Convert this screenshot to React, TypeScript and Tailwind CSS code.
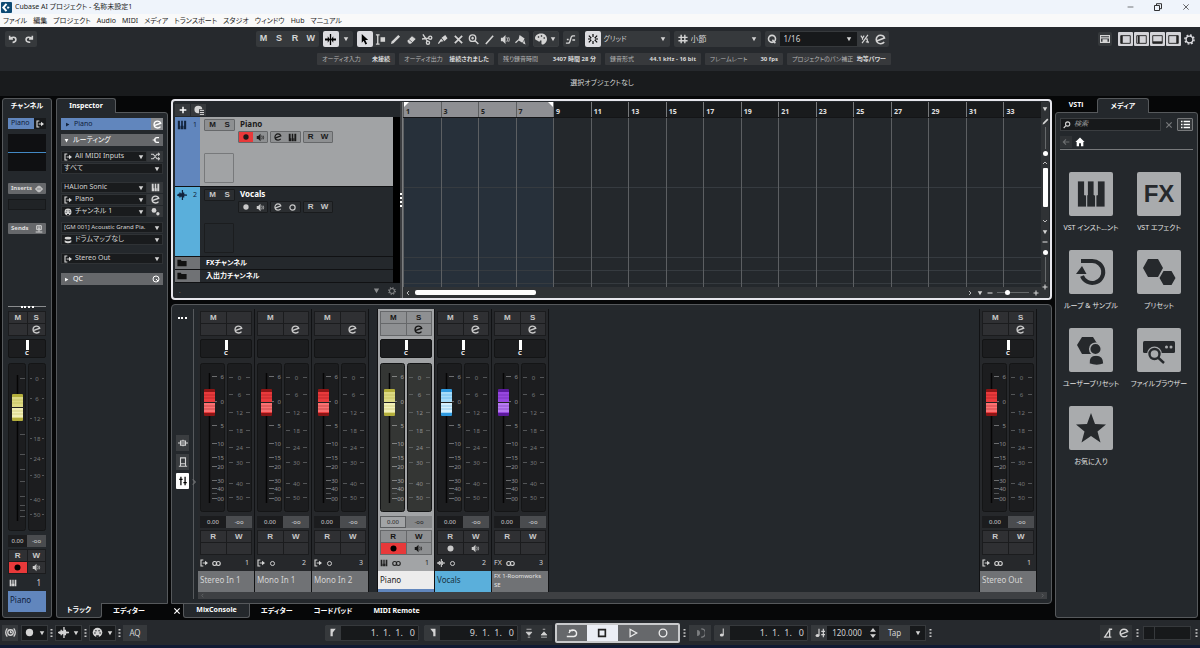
import React from "react";

const PATHS: Record<string, React.ReactNode> = {
  undo: <path d="M2 2v4h4M2.500 5.500C4 3.200 9.500 3 9.500 6.500 9.500 9 7.500 10 5.500 10" fill="none" stroke="currentColor" strokeWidth="1.900" />,
  redo: <path d="M10 2v4H6M9.500 5.500C8 3.200 2.500 3 2.500 6.500 2.500 9 4.500 10 7.500 9.800" fill="none" stroke="currentColor" strokeWidth="1.900" />,
  constrain: <path d="M0 5h3V2.500L5.500 6 3 9.500V7H0zM12 5H9V2.500L6.500 6 9 9.500V7h3zM5.300 0h1.400v12H5.300z" fill="currentColor" />,
  arrow: <path d="M3 0l7 6.500H6.800l2 4-1.800.9-1.900-4L3 9.500z" fill="currentColor" />,
  range: <><path d="M1 1h4M1 11h4M3 1v10" fill="none" stroke="currentColor" strokeWidth="1.500" /><path d="M6 3.500h5v5H6z" fill="currentColor" /></>,
  pencil: <path d="M1 11l.8-2.800L9 1l2 2-7.200 7.200z" fill="currentColor" />,
  eraser: <path d="M1 7.500L6.500 2 11 5.500 5.500 11H3zM3 5.800l4 3.400" fill="currentColor" stroke="#3c3f42" strokeWidth=".8" />,
  scissors: <g fill="none" stroke="currentColor" strokeWidth="1.500"><circle cx="9" cy="4" r="1.700" /><circle cx="6.500" cy="9.500" r="1.700" /><path d="M1 .5l5 7.500M0 5.500l7.500-1" /></g>,
  glue: <path d="M5 4l4-3 2.500 3.500L8 8zM4.500 5L7 8l-3 .5L2 11l-1-1z" fill="currentColor" />,
  x: <path d="M2 2l8 8M10 2l-8 8" fill="none" stroke="currentColor" strokeWidth="1.800" />,
  zoom: <g fill="none" stroke="currentColor" strokeWidth="1.500"><circle cx="5" cy="4.500" r="3.500" /><path d="M7.500 7l3.800 4M3.500 4.500h3M5 3v3" /></g>,
  search: <g fill="none" stroke="currentColor" strokeWidth="1.600"><circle cx="7" cy="4.500" r="3.200" /><path d="M4.500 7L1 10.500" /></g>,
  line: <path d="M2 11L10 2" fill="none" stroke="currentColor" strokeWidth="1.700" />,
  speaker: <><path d="M1 4h2l3-3v10L3 8H1z" fill="currentColor" /><path d="M7.500 3.500q1.500 2.500 0 5M9.500 3.500q1.300 2.500 0 5" fill="none" stroke="currentColor" /></>,
  bucket: <path d="M0 9l4-3.500L5 1l5.500 4L8 9.500 4 7 1 10zM10 6.500l1.500 5-3-1.500z" fill="currentColor" />,
  palette: <><path d="M6 .5C2 .5 0 3 0 5c0 2.500 2 2 3 3S5 9 5 7.500h1.500c0 2-.5 4 1 4S12 9.500 12 6 9.500.5 6 .5z" fill="currentColor" /><g fill="#17191b"><circle cx="3.500" cy="4" r=".8" /><circle cx="6.500" cy="3" r=".8" /><circle cx="9.200" cy="5" r=".8" /></g></>,
  curve: <path d="M1 10h2.500C7 10 5 2 8.500 2H11M2 6h2M8 6.500h3" fill="none" stroke="currentColor" strokeWidth="1.500" />,
  snap: <path d="M6 0v3.500M6 8.500V12M1 2l3 3M1 10l3-3M11 2L8 5M11 10L8 7M0 6h3.500M8.500 6H12" fill="none" stroke="currentColor" strokeWidth="1.400" />,
  hash: <path d="M3.800 1v10M8.200 1v10M.5 4h11M.5 8h11" fill="none" stroke="currentColor" strokeWidth="1.700" />,
  q: <g fill="none" stroke="currentColor" strokeWidth="1.900"><circle cx="6" cy="5.800" r="4.200" /><path d="M6.500 7l3.500 4" /></g>,
  iq: <path d="M1 2l2 3 2-3M3 5v2M2.500 11L9.500 1M7 6h2.500M7 9.500h3.500M8 5.500L10 11" fill="none" stroke="currentColor" strokeWidth="1.400" />,
  e: <path d="M2.500 7.300L10.300 4.300C9.700 2.300 8 1.400 6 1.400 3.400 1.400 1.400 3.500 1.400 6s2 4.600 4.800 4.600c1.600 0 2.900-.6 3.800-1.800" fill="none" stroke="currentColor" strokeWidth="1.800" />,
  route: <><path d="M5 1.500H1.500v9H5M4 6h4" fill="none" stroke="currentColor" strokeWidth="1.700" /><path d="M7.500 2.500L12 6l-4.500 3.500z" fill="currentColor" /></>,
  shuffle: <path d="M0 3h3l5 6h3M0 9h3l5-6h3M9.500 1l2 2-2 2M9.500 7l2 2-2 2" fill="none" stroke="currentColor" strokeWidth="1.400" />,
  keys: <path d="M1 1h2.500v6H4v4H1zM5 1h2v6h.7v4H4.600V7H5zM8.500 1H11v10H8.300V7h.2z" fill="currentColor" />,
  wave: <path d="M0 6h1.500M2 4.500v3M3.500 3v6M5 4v4M6.500 0v12M8 3v6M9.500 5v2M10 6h2" fill="none" stroke="currentColor" strokeWidth="1.500" />,
  rec: <circle cx="6" cy="6" r="4" fill="currentColor" />,
  ring: <circle cx="6" cy="6" r="3.500" fill="none" stroke="currentColor" strokeWidth="1.600" />,
  stereo: <g fill="none" stroke="currentColor" strokeWidth="1.500"><circle cx="3.600" cy="6" r="2.600" /><circle cx="8.400" cy="6" r="2.600" /></g>,
  midi: <><circle cx="6" cy="6" r="5.200" fill="currentColor" /><g fill="#202326"><circle cx="3.200" cy="6.500" r=".8" /><circle cx="4.300" cy="4" r=".8" /><circle cx="7.700" cy="4" r=".8" /><circle cx="8.800" cy="6.500" r=".8" /><path d="M4.500 9h3v2h-3z" /></g></>,
  drum: <><ellipse cx="6" cy="3.200" rx="5" ry="2" fill="currentColor" /><path d="M1 6.500q5 3 10 0v3q-5 3-10 0z" fill="currentColor" /></>,
  dots: <><circle cx="4" cy="4.500" r="3.200" fill="currentColor" /><circle cx="9.200" cy="9" r="2.200" fill="currentColor" /></>,
  split: <path d="M1 6h3M10.500 2.500H7.500Q4 2.500 4 6t3.500 3.500h3M6 6H4" fill="none" stroke="currentColor" strokeWidth="1.800" />,
  qc: <g fill="none" stroke="currentColor" strokeWidth="1.500"><circle cx="6" cy="6" r="4.500" /><path d="M6 6l3 3" /></g>,
  inserts: <path d="M0 6h3M9 6h3M3 3h6v6H3zM6 1v10" fill="none" stroke="currentColor" strokeWidth="1.500" />,
  sends: <path d="M2.500 1h7v6h-7zM6 7v3M1 10.500h10M4 3h4M4 5h4" fill="none" stroke="currentColor" strokeWidth="1.400" />,
  plus: <path d="M6 1v10M1 6h10" stroke="currentColor" strokeWidth="2.200" />,
  minus: <path d="M1 6h10" stroke="currentColor" strokeWidth="2.200" />,
  preset: <><path d="M5 1a4.500 4.500 0 1 0 0 9h1V5h4Q9.500 1 5 1z" fill="currentColor" /><path d="M7 6.500h5M7 9h5M7 11.300h5" stroke="currentColor" strokeWidth="1.200" /></>,
  folder: <path d="M.5 2h4l1 1.500h6V10H.5z" fill="currentColor" />,
  gear: <g fill="none" stroke="currentColor"><circle cx="6" cy="6" r="3.700" strokeWidth="1.500" /><circle cx="6" cy="6" r="5" strokeWidth="1.600" strokeDasharray="1.960 1.960" /></g>,
  list: <path d="M0 2h2M3.500 2H12M0 6h2M3.500 6H12M0 10h2M3.500 10H12" stroke="currentColor" strokeWidth="1.800" />,
  back: <path d="M11 6H2M6 2L2 6l4 4" fill="none" stroke="currentColor" strokeWidth="1.700" />,
  home: <path d="M6 .5L.5 6H2v5h2.800V7.500h2.400V11H10V6h1.500z" fill="currentColor" />,
  left: <path d="M8 2L4 6l4 4" fill="none" stroke="currentColor" strokeWidth="1.700" />,
  right: <path d="M4 2l4 4-4 4" fill="none" stroke="currentColor" strokeWidth="1.700" />,
  up: <path d="M2 8l4-4 4 4" fill="none" stroke="currentColor" strokeWidth="1.700" />,
  down: <path d="M2 4l4 4 4-4" fill="none" stroke="currentColor" strokeWidth="1.700" />,
  tri: <path d="M1.500 2.500h9L6 10.500z" fill="currentColor" />,
  triR: <path d="M2.500 1.500v9L10.500 6z" fill="currentColor" />,
  clock: <g fill="none" stroke="currentColor" strokeWidth="1.400"><circle cx="6" cy="6" r="3" /><path d="M2.500 1.500Q-1 6 2.500 10.500M9.500 1.500q3.500 4.500 0 9M6 4v2h1.500" /></g>,
  flagL: <path d="M2 1h7L5 6v5H2z" fill="currentColor" />,
  flagR: <path d="M10 1H3l4 5v5h3z" fill="currentColor" />,
  punchD: <path d="M3 1.500h6M2.500 5h7L6 9zM4.500 11h3" fill="currentColor" stroke="currentColor" strokeWidth=".9" />,
  punchU: <path d="M4.500 1.500h3M2.500 8.500h7L6 4.500zM2.500 11h7" fill="currentColor" stroke="currentColor" strokeWidth=".9" />,
  cycle: <path d="M3.500 9.500H8Q11 9 10.500 5.500 9.500 2.500 6 3q-2 .5-3 3M.8 9.500h3M3 3.500h4" fill="none" stroke="currentColor" strokeWidth="1.400" />,
  stop: <path d="M2 2h8v8H2z" fill="none" stroke="currentColor" strokeWidth="2" />,
  play: <path d="M2.500 1.500v9L10.500 6z" fill="none" stroke="currentColor" strokeWidth="1.500" />,
  recO: <circle cx="6" cy="6" r="4.600" fill="none" stroke="currentColor" strokeWidth="1.600" />,
  moon: <><path d="M2.500 2.500a3.500 3.500 0 0 1 0 7z" fill="currentColor" /><path d="M7.500 1a5 5 0 0 1 0 10" fill="none" stroke="currentColor" strokeWidth="1.700" /></>,
  note: <><ellipse cx="5" cy="9.300" rx="2.600" ry="2" fill="currentColor" /><path d="M7 9.500V.5" stroke="currentColor" strokeWidth="1.400" /></>,
  tempo: <><ellipse cx="3" cy="9" rx="2.300" ry="1.800" fill="currentColor" /><path d="M4.800 9V1M7.500 4H12M7.500 8H12M10 1v10" fill="none" stroke="currentColor" strokeWidth="1.400" /></>,
  spin: <path d="M6 0l3.500 4.500h-7zM6 12L2.500 7.500h7z" fill="currentColor" />,
  metro: <path d="M1 11h9M2 11L8 2M7 1.500h4M8 2v9" fill="none" stroke="currentColor" strokeWidth="1.600" />,
  eqv: <path d="M3 3.500h6v5H3zM0 6h12M6 2v1.500M6 8.500V10" fill="none" stroke="currentColor" strokeWidth="1.300" />,
  sendv: <path d="M3 1h6v7H3zM1 11h10M3 8v3M9 8v3" fill="none" stroke="currentColor" strokeWidth="1.300" />,
  faders: <path d="M3.500 1v10M8.500 1v10M1.500 4h4M6.500 8h4" fill="none" stroke="currentColor" strokeWidth="1.500" />,
  keyboard: <path d="M.5 2h11v8H.5zM.5 4.500h11M3 7h6M3 8.500h6" fill="none" stroke="currentColor" strokeWidth="1.500" />,
};

function Ico({ n, c = "size-[10px]" }: { n: string; c?: string }) {
  return (
    <svg viewBox="0 0 12 12" className={`shrink-0 ${c}`} aria-hidden="true">
      {PATHS[n]}
    </svg>
  );
}

function Btn({ label, children, c = "" }: { label: string; children?: React.ReactNode; c?: string }) {
  return (
    <button type="button" aria-label={label} className={`flex items-center justify-center ${c}`}>
      {children}
    </button>
  );
}

function Sel({ label, value, c = "", t = "" }: { label: string; value: string; c?: string; t?: string }) {
  return (
    <span className={`flex min-w-0 flex-1 items-center ${c}`}>
      <select aria-label={label} className={`min-w-0 flex-1 appearance-none bg-transparent outline-none ${t}`}>
        <option>{value}</option>
      </select>
      <Ico n="tri" c="size-[6px]" />
    </span>
  );
}

const Dots = () => (
  <svg viewBox="0 0 3 10" className="h-[10px] w-[3px] shrink-0 text-[#c8c8c8]" aria-hidden="true">
    <path d="M.5 1h2v1.500h-2zM.5 4.200h2v1.500h-2zM.5 7.400h2v1.500h-2z" fill="currentColor" />
  </svg>
);

/* ---------- Title, menu, toolbar ---------- */

const MENU = ["ファイル", "編集", "プロジェクト", "Audio", "MIDI", "メディア", "トランスポート", "スタジオ", "ウィンドウ", "Hub", "マニュアル"];

function TitleBar() {
  return (
    <header className="bg-[#eff4fb] text-[#1c1c1c]">
      <div className="flex h-[14px] items-center gap-[3px] px-[1px]">
        <svg viewBox="0 0 12 12" className="size-[11px]" aria-hidden="true">
          <rect width="12" height="12" rx="1" fill="#0d4a73" />
          <path d="M6 2L2.500 6 6 10" fill="none" stroke="#fff" strokeWidth="2.200" />
          <path d="M7.500 4.500L6.500 6l1 1.500 2-1.500z" fill="#fff" />
        </svg>
        <h1 className="text-[7px] leading-[14px]">Cubase AI プロジェクト - 名称未設定1</h1>
        <div className="ml-auto flex items-center gap-[20px] pr-[9px]">
          <Btn label="最小化"><Ico n="minus" c="h-[8px] w-[7px] [&_path]:stroke-1" /></Btn>
          <Btn label="元に戻す">
            <svg viewBox="0 0 8 8" className="size-[8px]"><path d="M.5 2.500h5v5h-5zM2.500 2V.7h5v5H6" fill="none" stroke="currentColor" strokeWidth=".9" /></svg>
          </Btn>
          <Btn label="閉じる"><Ico n="x" c="size-[8px] [&_path]:stroke-1" /></Btn>
        </div>
      </div>
      <nav className="flex h-[13px] items-center gap-[6px] bg-[#f9f9f9] px-[3px] text-[7px] leading-[13px]">
        {MENU.map((m) => (
          <button type="button" key={m}>{m}</button>
        ))}
      </nav>
    </header>
  );
}

const TOOLS = ["range", "pencil", "eraser", "scissors", "glue", "x", "zoom", "line", "speaker", "bucket"];
const STATUS = [
  ["オーディオ入力", "未接続", "w-[78px]"],
  ["オーディオ出力", "接続されました", "w-[95px]"],
  ["残り録音時間", "3407 時間 28 分", "w-[103px]"],
  ["録音形式", "44.1 kHz - 16 bit", "w-[96px]"],
  ["フレームレート", "30 fps", "w-[78px]"],
  ["プロジェクトのパン補正", "均等パワー", "w-[104px]"],
];

function Toolbar() {
  const box = "flex h-[16px] items-center rounded-[2px] bg-[#36393c]";
  return (
    <section className="bg-[#26292d] pt-[4px]">
      <div className="flex h-[16px] items-center justify-between px-[5px]">
        <div className={`${box} w-[32px] justify-around`}>
          <Btn label="元に戻す"><Ico n="undo" /></Btn>
          <Btn label="やり直し"><Ico n="redo" /></Btn>
        </div>
        <div className="flex items-center gap-[4px] pl-[9px]">
          <div className={`${box} w-[63px] font-[Liberation_Sans] text-[9px] font-bold`}>
            {["M", "S", "R", "W"].map((l) => <Btn key={l} label={l} c="flex-1">{l}</Btn>)}
          </div>
          <div className={`${box} bg-[#17191b]`}>
            <Btn label="オートスクロール" c="size-[16px] rounded-[2px] bg-[#dcdce0] text-black"><Ico n="constrain" c="size-[11px]" /></Btn>
            <Btn label="オートスクロール設定" c="w-[14px]"><Ico n="tri" c="size-[6px]" /></Btn>
          </div>
          <div className={`${box} w-[172px]`}>
            <Btn label="オブジェクトの選択" c="size-[16px] rounded-[2px] bg-[#dcdce0] text-black"><Ico n="arrow" c="size-[11px]" /></Btn>
            {TOOLS.map((t) => <Btn key={t} label={t} c="h-[16px] flex-1"><Ico n={t} c="size-[11px]" /></Btn>)}
          </div>
          <div className={`${box} w-[26px] justify-around border border-[#3a3d40] bg-[#17191b]`}>
            <Btn label="カラー"><Ico n="palette" c="size-[12px]" /></Btn>
            <Btn label="カラーメニュー"><Ico n="tri" c="size-[6px]" /></Btn>
          </div>
          <div className={`${box} w-[16px] justify-center`}><Btn label="ゼロクロス"><Ico n="curve" c="size-[11px]" /></Btn></div>
          <div className={`${box} ml-[2px] w-[85px] bg-[#17191b]`}>
            <Btn label="スナップ" c="size-[16px] rounded-[2px] bg-[#dcdce0] text-black"><Ico n="snap" /></Btn>
            <Sel label="スナップタイプ" value="グリッド" c="pl-[3px] pr-[4px]" t="text-[7px]" />
          </div>
          <div className={`${box} w-[87px] bg-[#17191b] px-[4px]`}>
            <Ico n="hash" />
            <Sel label="グリッドタイプ" value="小節" c="pl-[3px]" t="text-[8px]" />
          </div>
          <div className={`${box} w-[124px]`}>
            <Btn label="クオンタイズ" c="w-[15px]"><Ico n="q" /></Btn>
            <Sel label="クオンタイズプリセット" value="1/16" c="h-[14px] bg-[#17191b] pl-[4px] pr-[5px]" t="text-[8px]" />
            <Btn label="ソフトクオンタイズ" c="w-[16px]"><Ico n="iq" /></Btn>
            <Btn label="クオンタイズパネル" c="w-[16px]"><Ico n="e" c="size-[11px]" /></Btn>
          </div>
        </div>
        <div className="flex items-center gap-[6px]">
          <Btn label="オンスクリーンキーボード" c="size-[14px] rounded-[2px] bg-[#36393c]"><Ico n="keyboard" /></Btn>
          <div className="flex items-center gap-[1px] text-[#dcdce0]">
            {["M2 2v8", "M3 2v8", "M1 9h10", "M10 2v8"].map((d, i) => (
              <Btn key={d} label={`ゾーン ${i + 1}`} c="h-[14px] w-[15px] rounded-[1px] bg-[#d4d4d8] text-[#222]">
                <svg viewBox="0 0 12 12" className="size-[11px]"><path d="M.8 1.800h10.400v8.400H.8z" fill="none" stroke="currentColor" strokeWidth="1" /><path d={d} stroke="currentColor" strokeWidth="2" /></svg>
              </Btn>
            ))}
            <Btn label="設定" c="ml-[1px] h-[14px] w-[12px]"><Ico n="gear" c="size-[11px]" /></Btn>
          </div>
        </div>
      </div>
      <dl className="flex h-[24px] items-center justify-center gap-[4px] pl-[8px] text-[6px]">
        {STATUS.map(([k, v, w]) => (
          <div key={k} className={`flex h-[12px] items-center justify-between whitespace-nowrap rounded-[1px] bg-[#37393c] px-[5px] ${w}`}>
            <dt className="text-[#b4b4b4]">{k}</dt>
            <dd className="font-bold text-[#d8d8d8]">{v}</dd>
          </div>
        ))}
      </dl>
    </section>
  );
}

/* ---------- Channel strip parts ---------- */

type Scale = { w: number; h: number; capX: number; capY: number; top: number; bottom: number; fader: [number, string][]; ticks: number[]; meter: [number, string][] };

const MIX: Scale = {
  w: 52, h: 149, capX: 4, capY: 26, top: 10, bottom: 140,
  fader: [[13, "6"], [38, "0"], [62, "5"], [80, "10"], [94, "15"], [103, "20"], [117, "30"], [125, "40"], [135, "00"]],
  ticks: [130],
  meter: [[14, "0"], [31, "6"], [49, "12"], [67, "18"], [84, "24"], [99, "30"], [120, "40"], [134, "50"]],
};
const SIDE: Scale = {
  w: 38, h: 168, capX: 4, capY: 31, top: 12, bottom: 158, fader: [],
  ticks: [15, 71, 91, 106, 118, 133, 142, 147, 153],
  meter: [[15, "0"], [35, "6"], [55, "12"], [75, "18"], [95, "24"], [112, "30"], [136, "40"], [151, "50"]],
};
const CAPS: Record<string, [string, string, string]> = {
  red: ["#8c1515", "#e93a3c", "#ff8080"],
  yellow: ["#b3ae3c", "#dcd984", "#f6f4c4"],
  blue: ["#2f9ae0", "#a6dcfa", "#e4f6ff"],
  purple: ["#5b1a9c", "#9747e0", "#c08af6"],
};

function Fader({ s, color, light = false, name }: { s: Scale; color: string; light?: boolean; name: string }) {
  const [edge, mid, hi] = CAPS[color];
  const bg = light ? "#343634" : "#1c1d1f";
  const fg = light ? "#a4a4a4" : "#8f9092";
  const wide = s.w > 40;
  const half = wide ? 24 : 17;
  const right = s.w - half;
  const mx = right + half / 2;
  const dash = wide ? 4 : 2;
  return (
    <div className="relative">
      <svg viewBox={`0 0 ${s.w} ${s.h}`} className="block w-full font-[Noto_Sans]" aria-hidden="true">
        <rect x=".5" y=".5" width={half} height={s.h - 1} rx="2" fill={bg} stroke="#141516" />
        <rect x={right - 0.5} y=".5" width={half} height={s.h - 1} rx="2" fill={bg} stroke="#141516" />
        <path d={`M9.500 ${s.top}V${s.bottom}`} stroke="#050505" strokeWidth="1.500" />
        {s.ticks.map((y) => <path key={y} d={`M12 ${y + 0.5}h5`} stroke="#5e6062" strokeWidth=".8" />)}
        {s.fader.map(([y, t]) => (
          <g key={t}>
            <path d={`M12 ${y + 0.5}h5`} stroke={fg} strokeWidth=".7" />
            <text x="24" y={y + 2.5} fontSize="6" textAnchor="end" fill={fg}>{t}</text>
          </g>
        ))}
        {s.meter.map(([y, t]) => (
          <g key={t}>
            <path d={`M${right + 1} ${y + 0.5}h${dash}M${s.w - 2 - dash} ${y + 0.5}h${dash}`} stroke="#6c6e70" strokeWidth=".7" />
            <text x={mx - 0.5} y={y + 2.5} fontSize="6" textAnchor="middle" fill={light ? "#909090" : "#77797b"}>{t}</text>
          </g>
        ))}
        <g transform={`translate(${s.capX} ${s.capY})`}>
          <rect width="11" height="27" rx="1" fill={edge} />
          <rect y="3" width="11" height="21" fill={mid} />
          <rect y="14" width="11" height="9" fill={hi} opacity=".8" />
          <path d="M0 6h11M0 9h11M0 17h11M0 20h11" stroke={edge} strokeWidth=".7" opacity=".6" />
          <path d="M0 13.500h13" stroke="#222" strokeWidth="1" />
        </g>
      </svg>
      <input type="range" aria-label={`${name} ボリューム`} className="absolute inset-0 h-full w-1/2 opacity-0 [writing-mode:vertical-lr]" />
    </div>
  );
}

function Cell({ label, text, icon, on = false, light = false }: { label: string; text?: string; icon?: string; on?: boolean; light?: boolean }) {
  const tone = on ? "bg-[#e8393a] text-black" : light ? "bg-[#8e9092] text-[#151515]" : "bg-[#2f3033] text-[#c9c9c9]";
  return (
    <Btn label={label} c={`h-[11px] ${tone}`}>
      {text}
      {icon && <Ico n={icon} c="size-[9px]" />}
    </Btn>
  );
}

const gridOf = (light: boolean) =>
  `grid grid-cols-2 gap-px border ${light ? "border-[#66686a] bg-[#66686a]" : "border-[#1b1c1e] bg-[#1b1c1e]"} font-[Liberation_Sans] text-[8px] font-bold`;

function Controls({ name, solo, color, pan, rec, light = false, scale }: { name: string; solo: boolean; color: string; pan: boolean; rec?: "on" | "off"; light?: boolean; scale: Scale }) {
  return (
    <>
      <div className={gridOf(light)}>
        <Cell light={light} label="ミュート" text="M" />
        <Cell light={light} label="ソロ" text={solo ? "S" : ""} />
        <Cell light={light} label="リッスン" />
        <Cell light={light} label="編集" icon="e" />
      </div>
      <div className="mt-[3px] h-[19px] rounded-[2px] border border-[#131415] bg-[#1c1d1f] text-center text-[6px] font-bold leading-[7px] text-white">
        {pan && (
          <>
            <div className="mx-auto h-[10px] w-[3px] bg-white" />
            C
          </>
        )}
      </div>
      <div className="mt-[5px]"><Fader s={scale} color={color} light={light} name={name} /></div>
      <div className="mt-[4px] grid h-[12px] grid-cols-2 text-center text-[6px] leading-[12px]">
        <output className={light ? "border border-[#5b5d5f] leading-[10px] text-[#202020]" : "bg-[#1b1c1e]"}>0.00</output>
        <output className={light ? "bg-[#858789] text-[#202020]" : "bg-[#4a4c4f]"}>-oo</output>
      </div>
      <div className={`mt-[2px] ${gridOf(light)}`}>
        <Cell light={light} label="リード" text="R" />
        <Cell light={light} label="ライト" text="W" />
        <Cell light={light} label="録音可能" icon={rec ? "rec" : undefined} on={rec === "on"} />
        <Cell light={light} label="モニター" icon={rec ? "speaker" : undefined} />
      </div>
    </>
  );
}

type StripData = { name: string; no: number; solo: boolean; color: string; pan: boolean; rec?: "on" | "off"; light?: boolean; icon: string; mode: string; nameC: string };

const INPUTS: StripData[] = [
  { name: "Stereo In 1", no: 1, solo: false, color: "red", pan: true, icon: "route", mode: "stereo", nameC: "bg-[#707275]" },
  { name: "Mono In 1", no: 2, solo: false, color: "red", pan: false, icon: "route", mode: "ring", nameC: "bg-[#707275]" },
  { name: "Mono In 2", no: 3, solo: false, color: "red", pan: false, icon: "route", mode: "ring", nameC: "bg-[#707275]" },
];
const TRACKS: StripData[] = [
  { name: "Piano", no: 1, solo: true, color: "yellow", pan: true, rec: "on", light: true, icon: "keys", mode: "stereo", nameC: "bg-[#ececec] text-[#222] border-b-[3px] border-[#6186bd]" },
  { name: "Vocals", no: 2, solo: true, color: "blue", pan: true, rec: "off", icon: "wave", mode: "ring", nameC: "bg-[#5aafdb] text-[#18323f]" },
  { name: "FX 1-Roomworks SE", no: 3, solo: true, color: "purple", pan: true, icon: "FX", mode: "stereo", nameC: "bg-[#707275] text-[#e4e4e4]" },
];
const OUT: StripData = { name: "Stereo Out", no: 1, solo: true, color: "red", pan: true, icon: "route", mode: "stereo", nameC: "bg-[#707275]" };

function Strip({ d }: { d: StripData }) {
  return (
    <article className={`flex w-[57px] shrink-0 flex-col border-r border-[#111214] ${d.light ? "bg-[#a2a4a6] text-[#222]" : "bg-[#26282b] text-[#d4d4d4]"}`}>
      <div className="px-[2px] pt-[2px]"><Controls {...d} light={d.light} scale={MIX} /></div>
      <div className="flex h-[16px] items-center gap-[4px] px-[2px] text-[7px]">
        {d.icon === "FX" ? <span>FX</span> : <Ico n={d.icon} c="size-[8px]" />}
        <Ico n={d.mode} c={d.mode === "ring" ? "size-[7px]" : "size-[9px]"} />
        <span className="ml-auto pr-[3px]">{d.no}</span>
      </div>
      <h3 className={`h-[21px] px-[2px] ${d.name.length > 12 ? "pt-[1px] text-[6px] leading-[9px]" : "truncate text-[8px] leading-[18px]"} ${d.nameC}`}>{d.name}</h3>
    </article>
  );
}

/* ---------- Left column ---------- */

const FRAME = "border border-[#56595c] bg-[#24282c]";

function ChannelPanel() {
  const head = "flex h-[11px] items-center justify-between rounded-[1px] bg-[#66686b] px-[3px] text-[6px] font-bold text-[#ddd]";
  return (
    <aside className={`mr-px flex w-[50px] shrink-0 flex-col rounded-[3px] px-[5px] pb-[5px] text-[8px] ${FRAME}`}>
      <h2 className="flex h-[19px] items-center justify-center whitespace-nowrap pb-[4px] text-[7px] font-bold text-white">チャンネル</h2>
      <div className="flex h-[11px] items-center bg-[#6186bd] text-[#10203a]">
        <span className="flex-1 pl-[3px] text-[7px]">Piano</span>
        <Btn label="ルーティング" c="h-[11px] w-[12px] bg-[#17191b] text-[#ddd]"><Ico n="route" c="size-[8px]" /></Btn>
      </div>
      <div className="mt-[5px] flex h-[37px] items-center bg-[#0f1012]"><div className="h-px flex-1 bg-[#4389c4]" /></div>
      <div className={`mt-[12px] ${head}`}>Inserts<Ico n="inserts" c="size-[8px]" /></div>
      <div className="mt-[5px] h-[11px] border border-[#17191b] bg-[#202326]" />
      <div className={`mt-[13px] ${head}`}>Sends<Ico n="sends" c="size-[8px]" /></div>
      <div className="flex-1" />
      <div className="mb-[3px] flex h-[2px] items-center justify-center bg-[linear-gradient(#8a8c8e,#8a8c8e)] bg-[length:100%_1px] bg-no-repeat"><div className="w-[13px] border-t-2 border-dotted border-white" /></div>
      <Controls name="Piano" solo color="yellow" pan rec="on" scale={SIDE} />
      <div className="flex h-[17px] items-center justify-between px-[1px] pr-[5px]"><Ico n="keys" c="size-[8px]" />1</div>
      <div className="h-[21px] bg-[#6186bd] pl-[2px] leading-[17px] text-[#10203a]">Piano</div>
    </aside>
  );
}

function Row({ icon, value, right, label }: { icon?: string; value: string; right?: string; label: string }) {
  return (
    <div className="flex h-[12px] items-stretch border-b border-[#24282c] bg-[#191b1d] text-[7px]">
      <div className="flex min-w-0 flex-1 items-center gap-[3px] border border-[#2f3235] px-[2px]">
        {icon && <Ico n={icon} c="size-[8px]" />}
        <Sel label={label} value={value} t={value.length > 20 ? "text-[6px]" : ""} />
      </div>
      {right && <Btn label={`${label}設定`} c="w-[16px] bg-[#34373a]"><Ico n={right} c="size-[9px]" /></Btn>}
    </div>
  );
}

function Inspector() {
  return (
    <aside className="flex w-[112px] shrink-0 flex-col">
      <h2 className={`z-10 -mb-px flex h-[15px] w-[60px] items-center justify-center rounded-t-[3px] text-[7px] font-bold text-white ${FRAME} border-b-0`}>Inspector</h2>
      <div className={`flex-1 rounded-tr-[3px] px-[4px] pt-[5px] ${FRAME}`}>
        <div className="flex h-[12px] items-center gap-[4px] bg-[#6186bd] pl-[4px] text-[7px] text-[#10203a]">
          <Ico n="triR" c="size-[5px]" /><span className="flex-1">Piano</span>
          <Btn label="編集" c="h-[12px] w-[12px] bg-[#8b8d90] text-white"><Ico n="e" c="size-[9px]" /></Btn>
        </div>
        <div className="mt-[4px] flex h-[12px] items-center gap-[4px] bg-[#66686b] px-[3px] text-[7px] text-white"><Ico n="tri" c="size-[5px]" /><span className="flex-1">ルーティング</span><Ico n="split" c="size-[8px]" /></div>
        <div className="mt-[5px]">
          <Row icon="route" label="MIDI入力" value="All MIDI Inputs" right="shuffle" />
          <Row label="チャンネル" value="すべて" />
        </div>
        <div className="mt-[7px]">
          <Row label="インストゥルメント" value="HALion Sonic" right="keys" />
          <Row icon="route" label="MIDI出力" value="Piano" right="e" />
          <Row icon="midi" label="MIDIチャンネル" value="チャンネル 1" right="dots" />
        </div>
        <div className="mt-[4px]">
          <Row label="プログラム" value="[GM 001] Acoustic Grand Pia." />
          <Row icon="drum" label="ドラムマップ" value="ドラムマップなし" />
        </div>
        <div className="mt-[7px]"><Row icon="route" label="出力" value="Stereo Out" /></div>
        <div className="mt-[8px] flex h-[12px] items-center gap-[4px] bg-[#66686b] px-[3px] text-[7px] text-white"><Ico n="triR" c="size-[5px]" /><span className="flex-1">QC</span><Ico n="qc" c="size-[8px]" /></div>
      </div>
      <div className="flex h-[14px] text-[7px] font-bold text-white">
        <button type="button" className={`z-10 -mt-px w-[46px] rounded-b-[3px] ${FRAME} border-t-0`}>トラック</button>
        <button type="button" className="w-[54px]">エディター</button>
      </div>
    </aside>
  );
}

/* ---------- Arrange window ---------- */

function TrackRow({ no, name, sel, icon }: { no: number; name: string; sel: boolean; icon: string }) {
  const g = `flex h-[12px] items-center justify-around rounded-[1px] border ${sel ? "border-[#66686a] bg-[#8e9092]" : "border-[#191b1d] bg-[#2b2e31]"}`;
  return (
    <div className={`flex h-[70px] border-b border-[#101113] ${sel ? "bg-[#a1a3a5] text-[#1a1a1a]" : "bg-[#24282c] text-[#c9c9c9]"}`}>
      <div className={`flex w-[25px] items-start justify-between px-[2px] pr-[3px] pt-[3px] text-[7px] leading-[9px] text-[#13243c] ${sel ? "bg-[#6186bd]" : "bg-[#5aafdb]"}`}>
        <Ico n={icon} />{no}
      </div>
      <div className="flex flex-col justify-between py-[2px] pl-[4px] pr-[3px] font-[Liberation_Sans] text-[8px] font-bold">
        <div className={`${g} w-[31px]`}><Btn label="ミュート">M</Btn><Btn label="ソロ">S</Btn></div>
        <div className={`mb-[1px] size-[30px] rounded-[1px] border ${sel ? "border-[#77797b]" : "border-[#1b1d1f]"}`} />
      </div>
      <div>
        <h3 className={`pl-[2px] text-[8px] font-bold leading-[14px] ${sel ? "" : "text-white"}`}>{name}</h3>
        <div className="flex gap-[2px] font-[Liberation_Sans] text-[8px] font-bold">
          <div className={`${g} w-[30px]`}>
            <Btn label="録音可能" c={`h-[10px] flex-1 ${sel ? "bg-[#e8393a]" : ""}`}><Ico n="rec" c="size-[8px]" /></Btn>
            <Btn label="モニター" c="flex-1"><Ico n="speaker" c="size-[9px]" /></Btn>
          </div>
          <div className={`${g} w-[31px]`}><Btn label="編集"><Ico n="e" c="size-[8px]" /></Btn><Btn label="インストゥルメント"><Ico n={sel ? "keys" : "ring"} c="size-[9px]" /></Btn></div>
          <div className={`${g} w-[30px]`}><Btn label="リード">R</Btn><Btn label="ライト">W</Btn></div>
        </div>
      </div>
    </div>
  );
}

const BARS = Array.from({ length: 17 }, (_, i) => i * 2 + 1);
const COLS = "grid grid-cols-[repeat(17,minmax(0,1fr))]";

function Arrange() {
  return (
    <section className="flex h-[201px] rounded-[4px] border-2 border-[#e6e6ec] bg-[#24282c] pl-[2px] pr-[1px] pt-[1px]">
      <div className="flex w-[225px] shrink-0 flex-col">
        <div className="flex h-[15px] items-center gap-[1px]">
          <Btn label="トラックを追加" c="h-[12px] w-[15px] bg-[#36393c] text-white"><Ico n="plus" c="size-[8px]" /></Btn>
          <Btn label="トラックプリセット" c="h-[12px] w-[15px] bg-[#36393c]"><Ico n="preset" /></Btn>
        </div>
        <div className="border-r-[7px] border-black">
          <TrackRow no={1} name="Piano" sel icon="keys" />
          <TrackRow no={2} name="Vocals" sel={false} icon="wave" />
          {["FXチャンネル", "入出力チャンネル"].map((f) => (
            <div key={f} className="flex h-[13px] items-center border-b border-[#101113] text-[7px] font-bold text-white">
              <div className="flex h-full w-[25px] items-center bg-[#707275] pl-[2px] text-[#111]"><Ico n="folder" /></div>
              <span className="pl-[6px]">{f}</span>
            </div>
          ))}
        </div>
        <div className="flex flex-1 items-center justify-end gap-[8px] pr-[4px] text-[#8a8c8e]"><span className="mr-auto pl-[4px] text-[6px] leading-[6px]">.</span><Ico n="tri" c="size-[7px]" /><Ico n="gear" c="size-[8px]" /></div>
      </div>
      <div className="flex w-[3px] shrink-0 items-center justify-center border-r border-[#7a7c7e] bg-[#3a3c3f]">
        <div className="h-[14px] border-l-2 border-dotted border-white" />
      </div>
      <div className="flex min-w-0 flex-1 flex-col">
        <div className={`${COLS} h-[15px]`}>
          {BARS.map((b, i) => (
            <div key={b} className={`relative border-l pl-[2px] pt-[5px] text-[7px] font-bold leading-[10px] ${i < 4 ? "border-[#5c5e60] bg-[#8e8f93] text-[#1d1d1d]" : "border-[#77797b] bg-[#191b1d] text-[#e2e2e2]"}`}>
              {b}
              {i === 0 && <svg viewBox="0 0 5 5" className="absolute left-0 top-0 size-[5px]"><path d="M0 0h5L0 5z" fill="#fff" /></svg>}
              {i === 3 && <svg viewBox="0 0 5 5" className="absolute right-0 top-0 size-[5px]"><path d="M0 0h5v5z" fill="#fff" /></svg>}
            </div>
          ))}
        </div>
        <div className={`${COLS} min-h-0 flex-1 overflow-hidden border-t border-[#141517]`}>
          {BARS.map((b, i) => (
            <div key={b} className={`border-l border-[#5c5f62] ${i < 4 ? "bg-[#27303a]" : "bg-[#24282c]"}`}>
              <div className="h-[70px] border-b border-[#363b40]" />
              <div className="h-[70px] border-b border-[#363b40]" />
              <div className="h-[13px] border-b border-[#363b40]" />
              <div className="h-[13px] border-b border-[#363b40]" />
            </div>
          ))}
        </div>
        <div className="flex h-[11px] shrink-0 items-center gap-[4px] bg-[#2f3235] px-[2px]">
          <Btn label="左へスクロール"><Ico n="left" c="size-[6px]" /></Btn>
          <div className="flex-1"><div className="h-[5px] w-[22%] rounded-[2px] bg-white" /></div>
          <Btn label="右へスクロール"><Ico n="right" c="size-[6px]" /></Btn>
          <Btn label="ズームメニュー"><Ico n="tri" c="size-[6px]" /></Btn>
          <Ico n="minus" c="size-[6px]" />
          <div className="flex w-[32px] items-center bg-[linear-gradient(#66696b,#66696b)] bg-[length:100%_1px] bg-center bg-no-repeat pl-[8px]"><div className="size-[5px] rounded-full bg-white" /></div>
          <Ico n="plus" c="size-[6px]" />
        </div>
      </div>
      <div className="flex w-[8px] shrink-0 flex-col items-center gap-[2px] bg-[#2f3235] py-[4px]">
        <Ico n="tri" c="size-[6px]" />
        <Ico n="pencil" c="mt-[4px] size-[7px]" />
        <div className="h-[22px] w-px bg-[#66696b]" />
        <div className="size-[5px] rounded-full bg-white" />
        <Ico n="up" c="mt-[2px] size-[6px]" />
        <div className="h-[39px] w-[5px] shrink-0 rounded-[1px] bg-white" />
        <Ico n="down" c="mt-[9px] size-[6px]" />
        <Ico n="tri" c="mt-[3px] size-[6px]" />
        <Ico n="minus" c="mt-[2px] size-[6px]" />
        <div className="mt-[3px] size-[5px] shrink-0 rounded-full bg-white" />
        <div className="min-h-0 w-px flex-1 bg-[#66696b]" />
        <Ico n="plus" c="mb-[4px] size-[6px]" />
      </div>
    </section>
  );
}

/* ---------- Mix console ---------- */

function Mixer() {
  return (
    <section className="mt-[4px] flex min-h-0 flex-1 flex-col">
      <div className={`flex min-h-0 flex-1 rounded-t-[4px] rounded-br-[4px] pt-[4px] ${FRAME}`}>
        <div className="relative mb-[4px] flex w-[22px] shrink-0 flex-col items-center gap-[3px] border-r border-[#56595c] pt-[8px]">
          <div className="w-[9px] border-t-2 border-dotted border-white" />
          <Btn label="EQ" c="mt-[113px] h-[16px] w-[13px] bg-[#3a3d40]"><Ico n="eqv" /></Btn>
          <Btn label="センド" c="h-[16px] w-[13px] bg-[#3a3d40]"><Ico n="sendv" /></Btn>
          <Btn label="フェーダー" c="h-[16px] w-[13px] rounded-[1px] bg-white text-black"><Ico n="faders" /></Btn>
          <span className="absolute -right-[5px] top-[169px] text-[#6c6e70]"><Ico n="right" c="size-[8px]" /></span>
        </div>
        <div className="flex min-w-0 flex-1 flex-col pl-[4px] pr-[4px]">
          <div className="flex">
            {INPUTS.map((d) => <Strip key={d.name} d={d} />)}
            <div className="w-[9px] border-r border-[#111214]" />
            {TRACKS.map((d) => <Strip key={d.name} d={d} />)}
            <div className="flex-1 border-r border-[#111214]" />
            <Strip d={OUT} />
            <div className="w-[10px]" />
          </div>
          <div className="flex h-[7px] items-center justify-between bg-[#3e4043] px-[2px] text-[#6c6e70]"><Ico n="left" c="size-[5px]" /><Ico n="right" c="size-[5px]" /></div>
        </div>
      </div>
      <div className="flex h-[14px] items-center text-[7px] font-bold text-white">
        <Btn label="閉じる" c="w-[12px]"><Ico n="x" c="size-[8px]" /></Btn>
        <button type="button" className={`z-10 -mt-px h-[14px] w-[67px] rounded-b-[3px] ${FRAME} border-t-0`}>MixConsole</button>
        <div className="flex gap-[21px] pl-[11px]">
          {["エディター", "コードパッド", "MIDI Remote"].map((t) => <button type="button" key={t}>{t}</button>)}
        </div>
      </div>
    </section>
  );
}

/* ---------- Media panel ---------- */

const MEDIA: [string, React.ReactNode][] = [
  ["VST インスト...ント", <path key="a" d="M8.500 9h7v14h2v12h-9zM18.500 9h6.500v14h1.500v12H17.800V23h.7zM28.500 9h7.500v26h-9V23h1.500z" stroke="#a9abad" strokeWidth=".8" />],
  ["VST エフェクト", null],
  ["ループ & サンプル", <><path d="M12 11H23a11 11 0 1 1-10 15" fill="none" stroke="#26292c" strokeWidth="4" /><path d="M7 24l6-8 4.500 8z" /></>],
  ["プリセット", <path key="a" d="M11 9h10l5 9-5 9H11l-5-9zM26.500 21h8l4 7-4 7h-8l-4-7z" />],
  ["ユーザープリセット", <><path d="M13 9h11l5 8-5 9H13l-5-9z" /><g stroke="#a9abad" strokeWidth="1.500"><path d="M20 36q-1-9 7-9t8 9q-7 3-15 0z" /><circle cx="26.500" cy="21" r="5.800" /></g></>],
  ["ファイルブラウザー", <><rect x="6" y="13" width="32" height="12" rx="1.500" /><circle cx="29.500" cy="19" r="1.500" fill="#a9abad" /><circle cx="34" cy="19" r="1.500" fill="#a9abad" /><circle cx="17.500" cy="26" r="7.500" fill="#a9abad" /><g fill="#a9abad" stroke="#26292c" strokeWidth="2.400"><circle cx="17.500" cy="26" r="5" /><path d="M21 29.500l6 5.500" /></g></>],
  ["お気に入り", <path key="a" d="M22 7l4 11 11 .5-8.500 7L31.500 36.500 22 30l-9.500 6.500 3-11L7 18.500 18 18z" />],
];

function Media() {
  return (
    <aside className="flex w-[143px] shrink-0 flex-col">
      <div className="z-10 -mb-px flex h-[15px] text-[7px] font-bold text-white">
        <button type="button" className="w-[42px]">VSTi</button>
        <button type="button" className={`w-[52px] rounded-t-[3px] ${FRAME} border-b-0`}>メディア</button>
      </div>
      <div className={`flex-1 rounded-[3px] px-[4px] pt-[5px] ${FRAME}`}>
        <div className="flex items-center gap-[4px]">
          <label className="flex h-[13px] min-w-0 flex-1 items-center gap-[3px] border border-[#3a3d40] bg-[#17191b] px-[2px]">
            <Ico n="search" c="size-[8px]" />
            <input type="search" aria-label="検索" placeholder="検索" className="min-w-0 flex-1 bg-transparent text-[7px] italic outline-none placeholder:text-[#a0a0a0]" />
          </label>
          <Btn label="クリア" c="text-[#77797b]"><Ico n="x" c="size-[8px]" /></Btn>
          <Btn label="リスト表示" c="h-[13px] w-[16px] rounded-[1px] border border-[#77797b] bg-[#36393c] text-white"><Ico n="list" c="size-[9px]" /></Btn>
        </div>
        <div className="mt-[3px] flex h-[16px] items-center gap-[3px] border-b border-[#77797b]">
          <Btn label="戻る" c="size-[12px] bg-[#2f3235] text-[#6c6e70]"><Ico n="back" c="size-[8px]" /></Btn>
          <Btn label="ホーム" c="text-white"><Ico n="home" /></Btn>
        </div>
        <div className="-ml-[3px] mt-[22px] grid grid-cols-2 gap-y-[16px]">
          {MEDIA.map(([label, art]) => (
            <button type="button" key={label} className="flex flex-col items-center gap-[6px] whitespace-nowrap text-[7px] leading-[12px] text-[#e2e2e2]">
              <span className="flex size-[44px] items-center justify-center rounded-[2px] bg-[#a9abad] text-[#26292c]">
                {art ? <svg viewBox="0 0 44 44" className="size-[44px]" fill="#26292c" aria-hidden="true">{art}</svg> : <span className="font-[Liberation_Sans] text-[24px] font-bold">FX</span>}
              </span>
              {label}
            </button>
          ))}
        </div>
      </div>
    </aside>
  );
}

/* ---------- Transport ---------- */

function Locator({ icon, value, label }: { icon: string; value: string; label: string }) {
  return (
    <div className="flex h-[16px] w-[94px] items-center rounded-[1px] border border-[#36393c] bg-[#17191b]">
      <Btn label={label} c="h-full w-[15px] bg-[#36393c]"><Ico n={icon} c="size-[9px]" /></Btn>
      <output className="flex-1 whitespace-pre pr-[3px] text-right text-[9px]">{value}</output>
    </div>
  );
}

function Transport() {
  return (
    <footer className="flex h-[28px] items-center justify-between border-b-[3px] border-[#101a33] bg-[#26292d] px-[2px] text-[#d4d4d4]">
      <div className="flex items-center gap-[2px]">
        <Btn label="オーディオ性能" c="mr-[1px] size-[16px] bg-[#36393c]"><Ico n="clock" c="size-[11px]" /></Btn>
        {["rec", "wave", "midi"].map((n) => (
          <React.Fragment key={n}>
            <div className="flex h-[16px] w-[27px] items-center justify-around border border-[#36393c] bg-[#17191b]">
              <Btn label={n}><Ico n={n} c="size-[11px]" /></Btn><Btn label={`${n} メニュー`}><Ico n="tri" c="size-[6px]" /></Btn>
            </div>
            <Dots />
          </React.Fragment>
        ))}
        <Btn label="オートクオンタイズ" c="h-[16px] w-[24px] bg-[#36393c] text-[8px]">AQ</Btn>
      </div>
      <div className="flex items-center gap-[3px] pl-[10px]">
        <div className="flex gap-[5px]">
          <Locator icon="flagL" label="左ロケーター" value="1.  1.  1.   0" />
          <Locator icon="flagR" label="右ロケーター" value="9.  1.  1.   0" />
        </div>
        <div className="flex h-[16px] w-[31px] items-center justify-around bg-[#303336]">
          <Btn label="パンチイン"><Ico n="punchD" /></Btn><Btn label="パンチアウト"><Ico n="punchU" /></Btn>
        </div>
        <div className="flex h-[20px] w-[125px] rounded-[2px] border-2 border-[#c9cacc] bg-[#66686b]">
          {[["cycle", "サイクル"], ["stop", "停止"], ["play", "再生"], ["recO", "録音"]].map(([n, l]) => (
            <Btn key={n} label={l} c={`flex-1 ${n === "stop" ? "bg-[#ebeef5] text-[#222]" : "text-[#ececec]"}`}><Ico n={n} c={n === "cycle" ? "size-[12px]" : "size-[10px]"} /></Btn>
          ))}
        </div>
        <Dots />
        <Btn label="プリロール" c="h-[16px] w-[22px] bg-[#36393c] text-[#7c7e80]"><Ico n="moon" /></Btn>
        <Locator icon="note" label="時間表示" value="1.  1.  1.   0" />
        <div className="flex h-[16px] w-[115px] items-center border border-[#36393c] bg-[#17191b] text-[8px]">
          <Btn label="テンポトラック" c="h-full w-[15px] bg-[#36393c]"><Ico n="tempo" /></Btn>
          <output className="flex-1 text-center">120.000</output>
          <Btn label="テンポ増減" c="w-[12px]"><Ico n="spin" /></Btn>
          <Btn label="タップテンポ" c="h-full w-[31px] bg-[#36393c]">Tap</Btn>
          <Btn label="メニュー" c="w-[15px]"><Ico n="tri" c="size-[6px]" /></Btn>
        </div>
        <Dots />
      </div>
      <div className="flex items-center gap-[4px]">
        <div className="flex h-[16px] w-[32px] items-center justify-around bg-[#303336]">
          <Btn label="メトロノーム"><Ico n="metro" /></Btn><Btn label="メトロノーム設定"><Ico n="e" /></Btn>
        </div>
        <Dots />
        <div className="flex h-[14px] w-[48px] border border-[#36393c] bg-[#17191b]"><div className="w-[11px] border-r border-[#36393c]" /></div>
        <Dots />
      </div>
    </footer>
  );
}

export default function App() {
  return (
    <div lang="ja" className="flex min-h-screen flex-col bg-[#060708] font-['Noto_Sans','Noto_Sans_CJK_JP',sans-serif] text-[#d4d4d4] [font-feature-settings:'palt']">
      <TitleBar />
      <Toolbar />
      <p className="flex h-[25px] items-center justify-center bg-[#191b1d] pl-[4px] text-[7px]">選択オブジェクトなし</p>
      <main className="flex flex-1 gap-[3px] px-[2px] pb-[2px] pt-[2px]">
        <ChannelPanel />
        <Inspector />
        <div className="flex min-w-0 flex-1 flex-col pt-px">
          <Arrange />
          <Mixer />
        </div>
        <Media />
      </main>
      <Transport />
    </div>
  );
}
